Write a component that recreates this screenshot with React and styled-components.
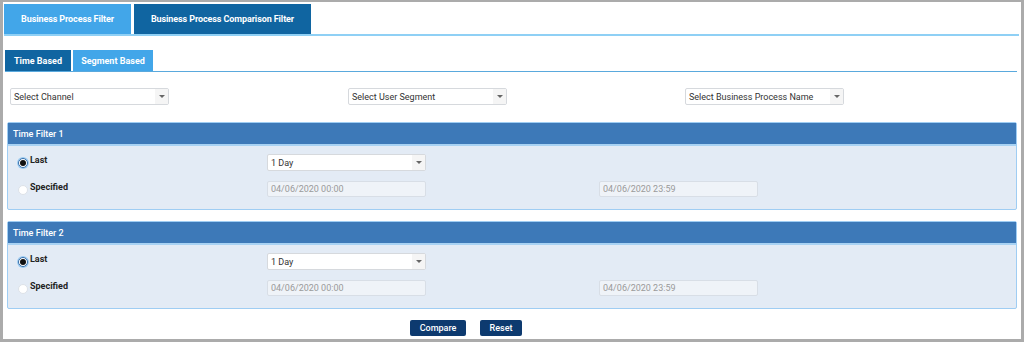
import React from 'react';
import styled, { createGlobalStyle } from 'styled-components';

const GlobalStyle = createGlobalStyle`
  html, body {
    margin: 0;
    padding: 0;
    background: #ffffff;
  }
  body {
    font-family: Roboto, "Liberation Sans", Arial, sans-serif;
    font-size: 9px;
    color: #333;
  }
`

const Frame = styled.div`
  box-sizing: border-box;
  width: 1024px;
  height: 342px;
  border: 3px solid #ababab;
  border-top-width: 2px;
  background: #fff;
  padding: 2px 2px 0 1px;
`

const TabBar = styled.div`
  display: flex;
  gap: 3px;
  height: 30px;
  border-bottom: 2px solid #8fd0f5;
`

const MainTab = styled.div`
  display: flex;
  align-items: center;
  justify-content: center;
  width: ${p => p.$w}px;
  background: ${p => (p.$active ? '#42a6e9' : '#1065a1')};
  color: #fff;
  font-weight: 700;
  font-size: 9px;
  letter-spacing: -0.1px;
`

const SubTabBar = styled.div`
  display: flex;
  gap: 2px;
  height: 21px;
  margin: 14px 2px 0 1px;
  border-bottom: 1px solid #5aa9dd;
`

const SubTab = styled.div`
  display: flex;
  align-items: center;
  justify-content: center;
  width: ${p => p.$w}px;
  background: ${p => (p.$active ? '#1065a1' : '#42a6e9')};
  color: #fff;
  font-weight: 700;
  font-size: 9px;
`

const SelectRow = styled.div`
  display: grid;
  grid-template-columns: 338px 337px 1fr;
  padding: 16px 0 0 6px;
  height: 17px;
`

const SelectBox = styled.div`
  box-sizing: border-box;
  display: flex;
  align-items: stretch;
  width: 159px;
  height: 17px;
  background: #fff;
  border: 1px solid #d6d9dd;
  border-radius: 2px;
  color: #333;
  font-size: 9px;
`

const SelectText = styled.div`
  flex: 1;
  display: flex;
  align-items: center;
  padding-left: 3px;
  white-space: nowrap;
`

const Arrow = styled.div`
  width: 13px;
  display: flex;
  align-items: center;
  justify-content: center;
  background: #f5f5f5;
  &::after {
    content: '';
    border-left: 3px solid transparent;
    border-right: 3px solid transparent;
    border-top: 3px solid #666;
  }
`

const Panel = styled.div`
  margin: ${p => p.$top}px 2px 0 3px;
  border: 1px solid #9fcdf3;
  border-radius: 2px;
  background: #e3ebf5;
`

const PanelHead = styled.div`
  height: 21px;
  display: flex;
  align-items: center;
  padding-left: 5px;
  background: #3d79b8;
  border-bottom: 2px solid #a8d2f3;
  color: #fff;
  font-size: 9px;
  font-weight: 500;
`

const PanelBody = styled.div`
  display: grid;
  grid-template-columns: 249px 332px 1fr;
  grid-auto-rows: 17px;
  row-gap: 10px;
  padding: 8px 0 11px 10px;
`

const RadioCell = styled.div`
  display: flex;
  align-items: flex-start;
  gap: 2px;
  font-weight: 700;
  color: #222;
  font-size: 9px;
`

const Radio = styled.span`
  box-sizing: border-box;
  width: 10px;
  height: 10px;
  margin-top: 4px;
  border-radius: 50%;
  background: #fff;
  border: 1px solid ${p => (p.$checked ? '#3a6fa8' : '#dde2e8')};
  box-shadow: ${p => (p.$checked ? '0 0 0 1px #9fcdf3' : 'none')};
  display: flex;
  align-items: center;
  justify-content: center;
  &::after {
    content: '';
    width: 6px;
    height: 6px;
    border-radius: 50%;
    background: ${p => (p.$checked ? '#111' : 'transparent')};
  }
`

const RadioLabel = styled.span`
  line-height: 12px;
`

const DateInput = styled.div`
  box-sizing: border-box;
  width: 159px;
  height: 16px;
  display: flex;
  align-items: center;
  padding-left: 3px;
  background: #eff3f8;
  border: 1px solid #d8dee6;
  border-radius: 2px;
  color: #9a9a9a;
  font-size: 9px;
`

const ButtonRow = styled.div`
  display: flex;
  gap: 14px;
  padding: 11px 0 0 406px;
`

const Button = styled.button`
  width: ${p => p.$w}px;
  height: 16px;
  padding: 0;
  border: none;
  border-radius: 2px;
  background: #0d3a6f;
  color: #fff;
  font-family: Roboto, "Liberation Sans", Arial, sans-serif;
  font-size: 9px;
  font-weight: 500;
`

function TimeFilter({ title, top }) {
  return (
    <Panel $top={top}>
      <PanelHead>{title}</PanelHead>
      <PanelBody>
        <RadioCell>
          <Radio $checked />
          <RadioLabel>Last</RadioLabel>
        </RadioCell>
        <SelectBox>
          <SelectText>1 Day</SelectText>
          <Arrow />
        </SelectBox>
        <div />
        <RadioCell>
          <Radio />
          <RadioLabel>Specified</RadioLabel>
        </RadioCell>
        <DateInput>04/06/2020 00:00</DateInput>
        <DateInput>04/06/2020 23:59</DateInput>
      </PanelBody>
    </Panel>
  )
}

export default function App() {
  return (
    <Frame>
      <GlobalStyle />
      <TabBar>
        <MainTab $active $w={127}>Business Process Filter</MainTab>
        <MainTab $w={177}>Business Process Comparison Filter</MainTab>
      </TabBar>
      <SubTabBar>
        <SubTab $active $w={66}>Time Based</SubTab>
        <SubTab $w={80}>Segment Based</SubTab>
      </SubTabBar>
      <SelectRow>
        {['Select Channel', 'Select User Segment', 'Select Business Process Name'].map(label => (
          <SelectBox key={label}>
            <SelectText>{label}</SelectText>
            <Arrow />
          </SelectBox>
        ))}
      </SelectRow>
      <TimeFilter title="Time Filter 1" top={17} />
      <TimeFilter title="Time Filter 2" top={11} />
      <ButtonRow>
        <Button $w={56}>Compare</Button>
        <Button $w={42}>Reset</Button>
      </ButtonRow>
    </Frame>
  )
}
